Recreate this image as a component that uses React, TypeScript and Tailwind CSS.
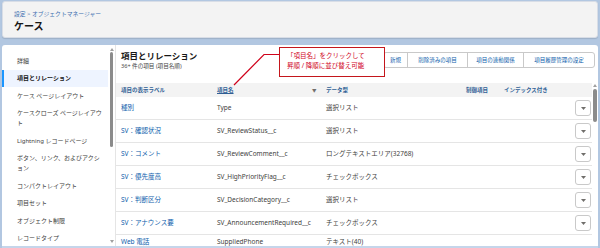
import React from 'react';

const font = { fontFamily: '"Noto Sans", "Noto Sans CJK JP", sans-serif' };

const navItems = [
  { label: '詳細' },
  { label: '項目とリレーション', active: true },
  { label: 'ケース ページレイアウト' },
  { label: 'ケースクローズ ページレイアウト' },
  { label: 'Lightning レコードページ' },
  { label: 'ボタン、リンク、およびアクション' },
  { label: 'コンパクトレイアウト' },
  { label: '項目セット' },
  { label: 'オブジェクト制限' },
  { label: 'レコードタイプ' },
];

const rows = [
  { label: '種別', api: 'Type', type: '選択リスト' },
  { label: 'SV：確認状況', api: 'SV_ReviewStatus__c', type: '選択リスト' },
  { label: 'SV：コメント', api: 'SV_ReviewComment__c', type: 'ロングテキストエリア(32768)' },
  { label: 'SV：優先度高', api: 'SV_HighPriorityFlag__c', type: 'チェックボックス' },
  { label: 'SV：判断区分', api: 'SV_DecisionCategory__c', type: '選択リスト' },
  { label: 'SV：アナウンス要', api: 'SV_AnnouncementRequired__c', type: 'チェックボックス' },
];

const buttons = ['新規', '削除済みの項目', '項目の連動関係', '項目履歴管理の設定'];

function RowMenu() {
  return (
    <div className="w-[16px] h-[16px] border border-[#c9c9c9] rounded-[3px] bg-white flex items-center justify-center">
      <svg width="5" height="3" viewBox="0 0 5 3">
        <path d="M0 0h5L2.5 3z" fill="#706e6b" />
      </svg>
    </div>
  );
}

export default function App() {
  return (
    <div style={font} className="w-[600px] h-[248px] overflow-hidden bg-[#b2c7e1] px-[2px] pt-[1px] flex flex-col gap-[7px]">
      {/* Page header */}
      <div className="h-[37px] shrink-0 bg-[#f3f3f3] border border-[#d8dde6] rounded-[3px] shadow-[0_1px_1px_rgba(0,0,0,0.12)] px-[11px] pt-[8px]">
        <p className="text-[5.8px] leading-[8px] text-[#3c6fb0]">設定 &gt; オブジェクトマネージャー</p>
        <h1 className="text-[10px] leading-[14px] font-bold text-[#181818] mt-[1px]">ケース</h1>
      </div>

      {/* Main card */}
      <div className="flex-1 min-h-0 bg-white rounded-t-[3px] flex border-b-2 border-[#c5d5ea]">
        {/* Sidebar */}
        <div className="w-[106px] shrink-0 pt-[7px] text-[6px] text-[#3e3e3c]">
          {navItems.map(n => (
            <div
              key={n.label}
              className={`py-[3.75px] pl-[13px] pr-[4px] leading-[10px] border-l-2 ${n.active ? 'bg-[#eef4ff] border-[#1b96ff] font-bold text-[#181818]' : 'border-transparent'}`}
            >
              {n.label}
            </div>
          ))}
        </div>
        {/* Sidebar scrollbar */}
        <div className="w-[7px] shrink-0 flex flex-col items-center pt-[3px]">
          <svg width="4" height="3" viewBox="0 0 4 3"><path d="M0 3h4L2 0z" fill="#a0a0a0" /></svg>
          <div className="w-[3.5px] h-[95px] rounded-full bg-[#8b8b8b] mt-[1px]" />
          <div className="flex-1" />
          <svg width="4" height="3" viewBox="0 0 4 3" className="mb-[3px]"><path d="M0 0h4L2 3z" fill="#a0a0a0" /></svg>
        </div>

        {/* Content */}
        <div className="flex-1 min-w-0 relative border-l border-[#e5e5e5] flex flex-col">
          <div className="h-[38px] shrink-0 flex items-start justify-between pl-[5px] pr-[3px]">
            <div className="pt-[5px]">
              <h2 className="text-[8.5px] leading-[12px] font-bold text-[#181818]">項目とリレーション</h2>
              <p className="text-[5.6px] leading-[8px] text-[#444]">36+ 件の項目 (項目名順)</p>
            </div>
            <div className="flex mt-[7px] border border-[#c9c9c9] rounded-[3px] h-[16px] bg-white">
              {buttons.map((b, i) => (
                <div
                  key={b}
                  className={`flex items-center justify-center text-[5.5px] text-[#0b5cab] ${i > 0 ? 'border-l border-[#c9c9c9]' : ''} ${['w-[23px]', 'w-[60px]', 'w-[56px]', 'w-[71px]'][i]}`}
                >
                  {b}
                </div>
              ))}
            </div>
          </div>

          <div className="flex flex-1 min-h-0">
            <div className="flex-1 min-w-0 flex flex-col">
              {/* Column header */}
              <div className="h-[14px] shrink-0 bg-[#f3f3f3] flex items-center text-[5.5px] font-bold text-[#2f5f95] pl-[5px]">
                <div className="w-[96px]">項目の表示ラベル</div>
                <div className="w-[95px] underline">項目名</div>
                <div className="w-[14px] text-[4.5px] text-[#706e6b]">▼</div>
                <div className="w-[140px]">データ型</div>
                <div className="w-[38px]">制御項目</div>
                <div className="w-[71px]">インデックス付き</div>
              </div>
              {rows.map(r => (
                <div key={r.api} className="h-[23px] shrink-0 flex items-center text-[6.5px] pl-[5px] border-b border-[#e5e5e5]">
                  <div className="w-[96px] text-[#0b5cab] whitespace-nowrap">{r.label}</div>
                  <div className="w-[109px] text-[#3e3e3c] whitespace-nowrap">{r.api}</div>
                  <div className="w-[140px] text-[#3e3e3c] whitespace-nowrap">{r.type}</div>
                  <div className="w-[109px]" />
                  <RowMenu />
                </div>
              ))}
              {/* Partially visible last row */}
              <div className="flex-1 min-h-0 flex items-start pt-[2px] text-[6.5px] leading-[9px] pl-[5px]">
                <div className="w-[96px] text-[#0b5cab] whitespace-nowrap">Web 電話</div>
                <div className="w-[109px] text-[#3e3e3c] whitespace-nowrap">SuppliedPhone</div>
                <div className="w-[140px] text-[#3e3e3c] whitespace-nowrap">テキスト(40)</div>
              </div>
            </div>
            {/* Table scrollbar */}
            <div className="w-[6px] shrink-0 flex flex-col items-center pt-[1px]">
              <svg width="4" height="3" viewBox="0 0 4 3"><path d="M0 3h4L2 0z" fill="#a0a0a0" /></svg>
              <div className="w-[3.5px] h-[33px] rounded-full bg-[#8b8b8b] mt-[2px]" />
            </div>
          </div>

          {/* Callout annotation */}
          <svg className="absolute left-[115px] top-[5px]" width="60" height="36" viewBox="0 0 60 36">
            <path d="M50 4.5H33L3 35" stroke="#d0021b" strokeWidth="1.2" fill="none" />
          </svg>
          <div className="absolute left-[163px] top-[2px] w-[106px] h-[30px] bg-white border-[1.5px] border-[#c4161c] px-[7px] pt-[3px] text-[6.5px] leading-[10px] text-[#d0021b]">
            <p>「項目名」をクリックして</p>
            <p>昇順 / 降順に並び替え可能</p>
          </div>
        </div>
      </div>
    </div>
  );
}
